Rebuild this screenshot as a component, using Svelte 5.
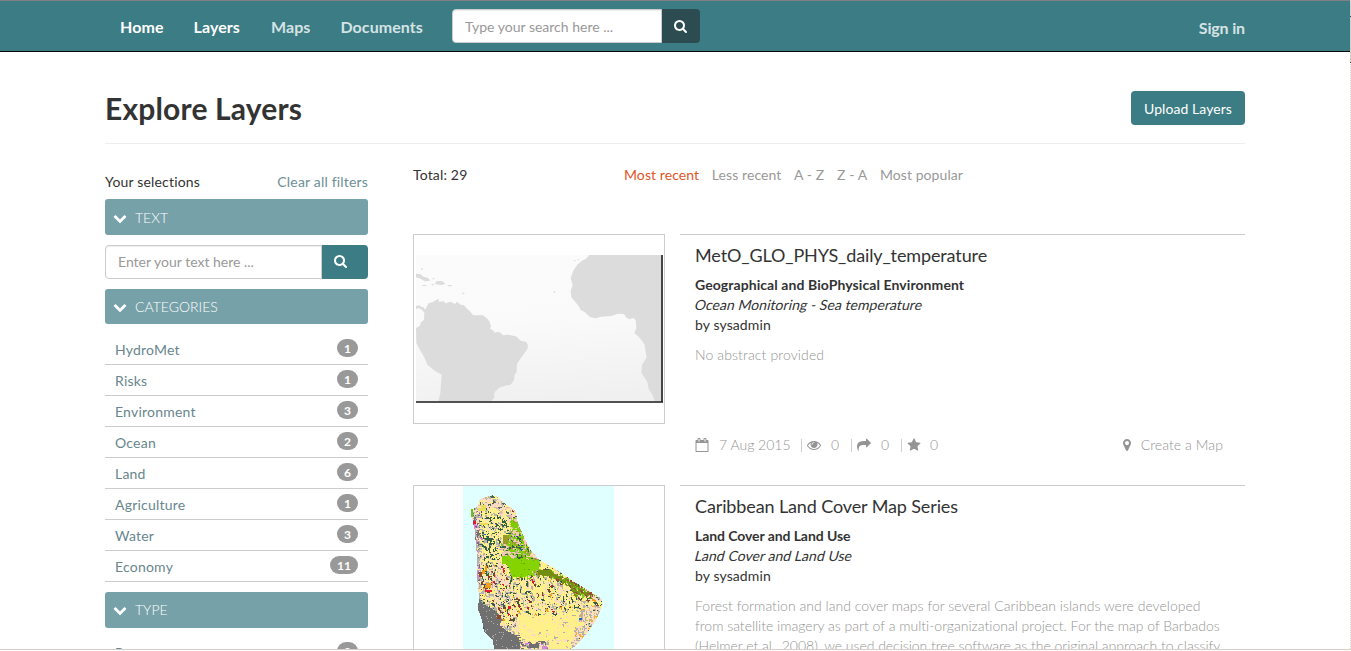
<script>
  const icons = {
    search: 'M1152 704q0-185-131.5-316.5t-316.5-131.5-316.5 131.5-131.5 316.5 131.5 316.5 316.5 131.5 316.5-131.5 131.5-316.5zm512 832q0 52-38 90t-90 38q-54 0-90-38l-343-342q-179 124-399 124-143 0-273.5-55.5t-225-150-150-225-55.5-273.5 55.5-273.5 150-225 225-150 273.5-55.5 273.5 55.5 225 150 150 225 55.5 273.5q0 220-124 399l343 343q37 37 37 90z',
    chevron: 'M1683 808l-742 741q-19 19-45 19t-45-19l-742-741q-19-19-19-45.5t19-45.5l166-165q19-19 45-19t45 19l531 531 531-531q19-19 45-19t45 19l166 165q19 19 19 45.5t-19 45.5z',
    star: 'M1728 647q0 22-26 48l-363 354 86 500q1 7 1 20 0 21-10.5 35.5t-30.5 14.5q-19 0-40-12l-449-236-449 236q-22 12-40 12-21 0-31.5-14.5t-10.5-35.5q0-6 2-20l86-500-364-354q-25-27-25-48 0-37 56-46l502-73 225-455q19-41 49-41t49 41l225 455 502 73q56 9 56 46z',
    share: 'M1792 640q0 26-19 45l-512 512q-19 19-45 19t-45-19-19-45v-256h-224q-98 0-175.5 6t-154 21.5-133 42.5-105.5 69.5-80 101-48.5 138.5-17.5 181q0 55 5 123 0 6 2.5 23.5t2.5 26.5q0 15-8.5 25t-23.5 10q-16 0-28-17-7-9-13-22t-13.5-30-10.5-24q-127-285-127-451 0-199 53-333 162-403 875-403h224v-256q0-26 19-45t45-19 45 19l512 512q19 19 19 45z',
    eye: 'M1664 960q-152-236-381-353 61 104 61 225 0 185-131.5 316.5t-316.5 131.5-316.5-131.5-131.5-316.5q0-121 61-225-229 117-381 353 133 205 333.5 326.5t434.5 121.5 434.5-121.5 333.5-326.5zm-720-384q0-20-14-34t-34-14q-125 0-214.5 89.5t-89.5 214.5q0 20 14 34t34 14 34-14 14-34q0-86 61-147t147-61q20 0 34-14t14-34zm848 384q0 34-20 69-140 230-376.5 368.5t-499.5 138.5-499.5-139-376.5-368q-20-35-20-69t20-69q140-229 376.5-368t499.5-139 499.5 139 376.5 368q20 35 20 69z',
    marker: 'M1152 640q0-106-75-181t-181-75-181 75-75 181 75 181 181 75 181-75 75-181zm256 0q0 109-33 179l-364 774q-16 33-47.5 52t-67.5 19-67.5-19-46.5-52l-365-774q-33-70-33-179 0-212 150-362t362-150 362 150 150 362z',
    calendar: 'M192 1664h1408v-1024h-1408v1024zm384-1216v-288q0-14-9-23t-23-9h-64q-14 0-23 9t-9 23v288q0 14 9 23t23 9h64q14 0 23-9t9-23zm768 0v-288q0-14-9-23t-23-9h-64q-14 0-23 9t-9 23v288q0 14 9 23t23 9h64q14 0 23-9t9-23zm384-64v1280q0 52-38 90t-90 38h-1408q-52 0-90-38t-38-90v-1280q0-52 38-90t90-38h128v-96q0-66 47-113t113-47h64q66 0 113 47t47 113v96h384v-96q0-66 47-113t113-47h64q66 0 113 47t47 113v96h128q52 0 90 38t38 90z'
  };

  const nav = [
    { label: 'Home', active: true },
    { label: 'Layers', active: true },
    { label: 'Maps' },
    { label: 'Documents' }
  ];
  const categories = [
    ['HydroMet', 1], ['Risks', 1], ['Environment', 3], ['Ocean', 2],
    ['Land', 6], ['Agriculture', 1], ['Water', 3], ['Economy', 11]
  ];
  const types = [['Raster', 9]];
  const sorts = ['Most recent', 'Less recent', 'A - Z', 'Z - A', 'Most popular'];
  const layers = [
    {
      title: 'MetO_GLO_PHYS_daily_temperature',
      category: 'Geographical and BioPhysical Environment',
      sub: 'Ocean Monitoring - Sea temperature',
      abstract: ['No abstract provided'],
      thumb: 'ocean'
    },
    {
      title: 'Caribbean Land Cover Map Series',
      category: 'Land Cover and Land Use',
      sub: 'Land Cover and Land Use',
      abstract: [
        'Forest formation and land cover maps for several Caribbean islands were developed',
        'from satellite imagery as part of a multi-organizational project. For the map of Barbados',
        '(Helmer et al., 2008), we used decision tree software as the original approach to classify'
      ],
      thumb: 'cover'
    }
  ];

  // Island coastline and the regions that bias the land-cover classes.
  const island = [[215,58],[235,50],[250,46],[265,48],[290,70],[322,92],[330,130],[352,180],[372,215],[395,240],[440,265],[490,300],[520,318],[580,355],[584,375],[570,410],[545,450],[510,492],[490,507],[258,507],[255,480],[228,455],[222,420],[210,390],[213,350],[207,290],[206,220],[200,150],[191,110],[192,90],[210,78]];
  const forest = [[300,105],[325,110],[345,170],[372,230],[395,240],[390,285],[340,290],[305,285],[298,255],[280,242],[278,190],[305,150]];
  const dense = [[280,228],[300,224],[318,238],[345,232],[360,240],[392,238],[392,265],[370,268],[372,282],[345,288],[310,290],[300,258],[282,245]];
  const urban = [[210,350],[225,372],[262,392],[280,415],[274,435],[300,455],[330,470],[335,507],[256,507],[254,482],[228,455],[222,420],[210,390]];
  const fringe = [[390,268],[425,265],[470,288],[520,318],[560,345],[545,352],[500,345],[465,305],[430,292],[390,282]];

  const inside = (x, y, poly) => {
    let hit = false;
    for (let i = 0, j = poly.length - 1; i < poly.length; j = i++) {
      const [ax, ay] = poly[i];
      const [bx, by] = poly[j];
      if (ay > y !== by > y && x < ((bx - ax) * (y - ay)) / (by - ay) + ax) hit = !hit;
    }
    return hit;
  };

  let seed = 90127;
  const rand = () => {
    seed = (seed * 1664525 + 1013904223) % 4294967296;
    return seed / 4294967296;
  };
  const pick = (choices) => {
    let r = rand();
    for (const [color, weight] of choices) {
      if (r < weight) return color;
      r -= weight;
    }
    return choices[0][0];
  };

  const mixes = {
    dense: [['#85d300', 0.97], ['#68a80b', 0.03]],
    forest: [['#80cc08', 0.42], ['#f4c9b4', 0.26], ['#9c9b37', 0.12], ['#bdb5ad', 0.1], ['#376348', 0.1]],
    urban: [['#707070', 0.96], ['#b4b4b4', 0.04]],
    edge: [['#b4b0ac', 0.3], ['#707070', 0.25], ['#fbdcc3', 0.25], ['#fff08a', 0.12], ['#dd78dd', 0.08]],
    fringe: [['#759312', 0.5], ['#8ccd22', 0.2], ['#974a37', 0.12], ['#fbdcc3', 0.18]],
    top: [['#fbdcc3', 0.5], ['#fff08a', 0.18], ['#b9b4b0', 0.12], ['#486b50', 0.06], ['#f3afc0', 0.09], ['#873e2d', 0.05]],
    north: [['#fff08a', 0.56], ['#fbdcc3', 0.12], ['#345f44', 0.2], ['#b4b0aa', 0.12]],
    mid: [['#fff08a', 0.32], ['#fbdcc3', 0.27], ['#b4b0aa', 0.2], ['#345f44', 0.13], ['#873e2d', 0.05], ['#e51c2b', 0.01], ['#f59d18', 0.02]],
    south: [['#fff08a', 0.72], ['#fbdcc3', 0.14], ['#b4b0aa', 0.06], ['#345f44', 0.06], ['#873e2d', 0.015], ['#e51c2b', 0.005]],
    plain: [['#fff08a', 0.84], ['#fbdcc3', 0.12], ['#b4b0aa', 0.04]],
    east: [['#fbdcc3', 0.46], ['#b4b0aa', 0.28], ['#fff08a', 0.16], ['#f5a93a', 0.07], ['#345f44', 0.03]]
  };

  const zoneAt = (x, y) => {
    if (inside(x, y, dense)) return 'dense';
    if (inside(x, y, urban)) return 'urban';
    if (inside(x, y, forest)) return 'forest';
    if (inside(x, y, fringe)) return 'fringe';
    if (y < 105 && (y < 82 || x > 270)) return 'top';
    if (x < 214) return 'edge';
    if (x - 290 > (y - 100) * 0.35 && y < 235) return 'top';
    if (y < 245) return 'north';
    if (x < 325 && y < 470) return 'mid';
    if (x > 500 - (y - 440) * 0.3 && y > 375) return 'east';
    if (y > 480 && x < 420) return 'edge';
    if (y > 400) return 'plain';
    return rand() < 0.45 ? 'mid' : 'south';
  };

  // One cell is one pixel; a cell often repeats its left or upper neighbour so that classes clump.
  const classes = {};
  let above = {};
  for (let y = 45; y < 507; y += 3) {
    const row = {};
    for (let x = 189; x < 590; x += 3) {
      if (!inside(x + 1.5, y + 1.5, island)) continue;
      const r = rand();
      let color = pick(mixes[zoneAt(x, y)]);
      const solid = inside(x, y, dense) || inside(x, y, urban);
      if (!solid && r < 0.28 && row[x - 3]) color = row[x - 3];
      else if (!solid && r < 0.56 && above[x]) color = above[x];
      row[x] = color;
      classes[color] = (classes[color] ?? '') + `M${x} ${y}h3v3h-3z`;
    }
    above = row;
  }
  const cover = Object.entries(classes);
</script>

{#snippet icon(name)}
  <svg class="icon" viewBox="0 0 1792 1792" aria-hidden="true"><path d={icons[name]} /></svg>
{/snippet}

{#snippet facets(items)}
  <ul class="facets">
    {#each items as [label, count]}
      <li><span class="label">{label}</span><span class="badge">{count}</span></li>
    {/each}
  </ul>
{/snippet}

<div class="page">
  <header>
    <div class="container bar">
      <nav>
        {#each nav as item}<span class:active={item.active}>{item.label}</span>{/each}
      </nav>
      <div class="search top">
        <input placeholder="Type your search here ..." />
        <button aria-label="Search">{@render icon('search')}</button>
      </div>
      <span class="signin">Sign in</span>
    </div>
  </header>

  <div class="container">
    <div class="heading">
      <h1>Explore Layers</h1>
      <button class="upload">Upload Layers</button>
    </div>

    <div class="columns">
      <aside>
        <div class="selections"><span>Your selections</span><span class="clear">Clear all filters</span></div>
        <h4>{@render icon('chevron')}TEXT</h4>
        <div class="search filter">
          <input placeholder="Enter your text here ..." />
          <button aria-label="Filter">{@render icon('search')}</button>
        </div>
        <h4 class="short">{@render icon('chevron')}CATEGORIES</h4>
        {@render facets(categories)}
        <h4 class="type">{@render icon('chevron')}TYPE</h4>
        {@render facets(types)}
      </aside>

      <main>
        <div class="sorting">
          <span class="total">Total: 29</span>
          <div class="sorts">
            {#each sorts as sort, i}<span class:selected={i === 0}>{sort}</span>{/each}
          </div>
        </div>

        {#each layers as layer}
          <article>
            <div class="thumb {layer.thumb}">
              {#if layer.thumb === 'ocean'}
                <svg width="248" height="149" viewBox="24 81 744 447">
                  <defs>
                    <linearGradient id="sea" x1="0.35" y1="0" x2="0.5" y2="1">
                      <stop offset="0" stop-color="#fbfbfb" />
                      <stop offset="0.45" stop-color="#fafafa" />
                      <stop offset="1" stop-color="#f0f0f0" />
                    </linearGradient>
                  </defs>
                  <path fill="url(#sea)" d="M24 81h741v444H24z" />
                  <g fill="#dcdcdc">
                    <path d="M24 234L34 232 40 237 46 238 51 245 62 226 74 222 90 213 94 217 90 221 108 220 112 226 128 221 142 228 146 221 160 231 167 231 178 243 186 250 195 262 225 262 236 270 244 280 249 294 246 302 257 308 258 314 272 311 286 322 300 320 324 325 338 338 355 342 360 352 358 363 346 380 332 400 327 407 326 432 320 440 318 457 308 470 290 474 276 478 260 492 258 502 260 508 250 520 91 520 97 495 98 480 101 440 82 430 58 410 48 386 34 362 25 345 24 300 36 293 38 284 48 275 49 254 42 246 33 240 24 243z" />
                    <path d="M544 81H760V520H740L734 502 722 482 718 462 700 434 702 410 710 398 716 388 712 366 710 350 702 338 690 324 679 316 685 300 683 276 676 270 664 274 654 268 648 258 630 257 610 264 580 266 562 271 546 267 530 252 518 246 512 234 490 208 488 188 494 172 488 150 496 128 508 110 522 98 534 92z" />
                    <path d="M24 137L38 139 46 146 60 150 67 158 50 160 38 152 24 148zM74 150h5v4h-5zM40 120h4v6h-4zM82 162L90 159 104 160 112 168 101 171 82 169zM43 171h12v3H43zM71 168h7v4h-7zM119 171h12v4h-12zM163 194h6v4h-6zM437 190h5v4h-5zM498 96h4v4h-4zM508 94L513 93 511 99z" />
                  </g>
                  <path fill="#444" d="M759 81h6v441h-6z" />
                  <path fill="#1c1c1c" d="M24 520h741v4.500H24z" />
                </svg>
              {:else}
                <svg width="151" height="188" viewBox="165 18 453 564" shape-rendering="crispEdges">
                  <path fill="#e0ffff" d="M165 18h453v564H165z" />
                  {#each cover as [color, d]}<path fill={color} {d} />{/each}
                  <path fill="#68c414" d="M190 88h5v24h-5z" />
                  <path fill="#e9dc58" d="M208 84h12v-8h15v18h-24zM215 128h24v6h-24z" />
                  <path fill="#e51c2b" d="M194 124h10v7h-10zM232 330h20v7h-20zM300 378h8v9h-8zM257 283h5v8h-5z" />
                  <path fill="#f59d18" d="M222 270h8v-12h8v14h-8v10h-8zM232 310h16v13h-18z" />
                  <path fill="#8c4a2b" d="M212 276h10v15h-10zM268 405h12v12h-12z" />
                  <path fill="#999a27" d="M286 164h14v27h-14z" />
                  <path fill="#738d0e" d="M390 270h30l42 24v8l-36-16h-36z" />
                  <path fill="#2361c6" d="M228 162h6v4h-6zM338 208h4v6h-4zM228 312h6v4h-6zM514 414h9v5h-9z" />
                  <path fill="#fff08a" d="M345 412h20v6h25v12h50v16h-30v8h-30v-6h-25v-12h-14zM390 322h20v14h-24zM490 427h38v12h-42z" />
                  <path fill="#707070" d="M364 491h30v12h-30z" />
                </svg>
              {/if}
            </div>
            <div class="details">
              <h2>{layer.title}</h2>
              <div class="info">
                <strong class={layer.thumb}>{layer.category}</strong>
                <em>{layer.sub}</em>
                <span class="by">by sysadmin</span>
              </div>
              <p>{#each layer.abstract as line}<span>{line}</span>{/each}</p>
              <div class="meta">
                {@render icon('calendar')}<span class="date">7 Aug 2015</span>
                <i></i>{@render icon('eye')}<span class="count">0</span>
                <i></i>{@render icon('share')}<span class="count">0</span>
                <i></i>{@render icon('star')}<span class="count">0</span>
                <span class="create">{@render icon('marker')}Create a Map</span>
              </div>
            </div>
          </article>
        {/each}
      </main>
    </div>
  </div>
  <div class="frame"><b></b></div>
</div>

<style>
  :global(body) { margin: 0; overflow: hidden; }
  .page, .page * { box-sizing: border-box; }
  .page { position: relative; height: 651px; overflow: hidden; background: #fff; font: 14px/20px Lato, sans-serif; color: #333; }
  .icon { width: 14px; height: 14px; fill: currentColor; flex: none; }
  .container { width: 1140px; margin-left: 105px; }
  header { height: 52px; background: #3c7c84; border-top: 1px solid #808080; border-bottom: 1px solid #080808; }
  .bar { display: flex; }
  nav { display: flex; width: 347px; padding: 16px 0 0 15px; gap: 30px; font-size: 16px; font-weight: 700; letter-spacing: 0.08px; color: #d5e3e5; white-space: nowrap; }
  nav span:nth-child(3) { margin-left: 1px; }
  .active { color: #fff; }
  .search { display: flex; width: 248px; height: 34px; margin-top: 8px; }
  input { flex: 1; min-width: 0; padding: 6px 12px; font: inherit; border: 1px solid #ccc; border-radius: 4px 0 0 4px; box-shadow: inset 0 1px 1px rgba(0, 0, 0, 0.075); outline: 0; }
  .top input { padding: 8px 12px 6px; }
  input::placeholder { color: #999; opacity: 1; }
  .search button { width: 38px; padding: 2px 0 0; border: 0; border-radius: 0 4px 4px 0; background: #2c4c52; color: #fff; display: flex; align-items: center; justify-content: center; }
  .signin { margin-left: auto; padding-top: 17px; font-size: 16px; font-weight: 700; letter-spacing: -0.15px; color: #d5e3e5; }
  .heading { display: flex; justify-content: space-between; height: 92px; padding-top: 39px; border-bottom: 1px solid #eee; }
  h1 { margin: -1px 0 0; font-size: 30px; line-height: 36px; font-weight: 700; letter-spacing: 0.17px; }
  .upload { width: 114px; height: 34px; border: 0; border-radius: 4px; background: #3c7c84; color: #fff; font: inherit; padding: 2px 0 0; letter-spacing: 0.06px; }
  .columns { display: flex; }
  aside { width: 263px; padding-top: 28px; }
  .selections { display: flex; justify-content: space-between; margin-bottom: 7px; letter-spacing: 0.18px; }
  .clear { color: #6d8f96; }
  h4 { display: flex; align-items: center; gap: 8px; height: 36px; margin: 0; padding: 2px 8px 0; border-radius: 3px; background: #76a1a8; color: #fff; font-size: 14px; font-weight: 300; }
  h4.short { height: 35px; padding-top: 0; }
  h4.type { padding-top: 0; }
  h4.type + .facets { margin-top: 9px; }
  .search.filter { width: 263px; margin: 10px 0; }
  .filter button { width: 46px; padding: 0 8px 0 0; background: #3c7c84; }
  .facets { list-style: none; margin: 10px 0; padding: 0; letter-spacing: 0.22px; }
  .facets li { display: flex; justify-content: space-between; height: 31px; padding: 5px 10px 0; border-bottom: 1px solid #ccc; color: #68868d; }
  .label { padding-top: 1px; }
  .badge { height: 18px; min-width: 21px; padding: 3px 7px; border-radius: 10px; background: #999; color: #fff; font-size: 12px; line-height: 13px; font-weight: 700; letter-spacing: 0; text-align: center; }
  main { width: 832px; margin-left: 45px; padding-top: 21px; }
  .sorting { display: flex; height: 69px; letter-spacing: 0.08px; }
  .total { width: 211px; letter-spacing: 0.16px; }
  .sorts { display: flex; gap: 12.7px; color: #999; }
  .selected { color: #e0561f; }
  article { display: flex; gap: 15px; height: 251px; }
  .thumb { display: flex; align-items: center; justify-content: center; width: 252px; height: 190px; border: 1px solid #ccc; }
  .thumb.ocean { padding-left: 1px; }
  .thumb.cover { padding-right: 1px; }
  .details { width: 565px; height: 251px; padding: 10px 15px 0; border-top: 1px solid #ccc; display: flex; flex-direction: column; }
  h2 { margin: 0 0 10px; font-size: 18px; line-height: 20px; font-weight: 400; letter-spacing: -0.12px; }
  .info { display: flex; flex-direction: column; align-items: flex-start; }
  strong.ocean { letter-spacing: 0.08px; }
  strong.cover { letter-spacing: -0.08px; }
  em { font-style: normal; transform: skewX(-14deg); letter-spacing: 0.05px; }
  .by { letter-spacing: 0.1px; }
  p { height: 80px; margin: 10px 0; overflow: hidden; font-weight: 300; color: #949494; white-space: nowrap; font-variant-ligatures: none; }
  p span { display: block; }
  p span:first-child { letter-spacing: 0.03px; }
  p span:last-child { letter-spacing: -0.03px; }
  p span:only-child { letter-spacing: 0.12px; }
  .meta { display: flex; align-items: center; height: 20px; font-weight: 300; color: #949494; }
  .date { width: 72px; margin: 0 10px; white-space: nowrap; }
  .count { width: 8px; margin: 0 12px 0 10px; }
  .count:nth-last-child(2) { margin-left: 9px; }
  i { width: 1px; height: 13px; margin-right: 5px; background: #ccd1d4; }
  .create { display: flex; align-items: center; gap: 7px; margin-left: auto; margin-right: 7px; letter-spacing: 0.08px; }
  .frame { position: absolute; inset: 0; border-bottom: 1px solid #fff; }
  .frame::after { content: ''; position: absolute; left: 0; right: 0; bottom: 0; height: 1px; background: #d4d0c8; }
  .frame b { position: absolute; right: 0; top: 0; bottom: 1px; width: 1px; background: linear-gradient(#d4d0c8 16px, #404040 16px 17px, #d4d0c8 17px 62px, #404040 62px 63px, transparent 63px), repeating-linear-gradient(#d4d0c8 0 1px, #fff 1px 2px); }
</style>
